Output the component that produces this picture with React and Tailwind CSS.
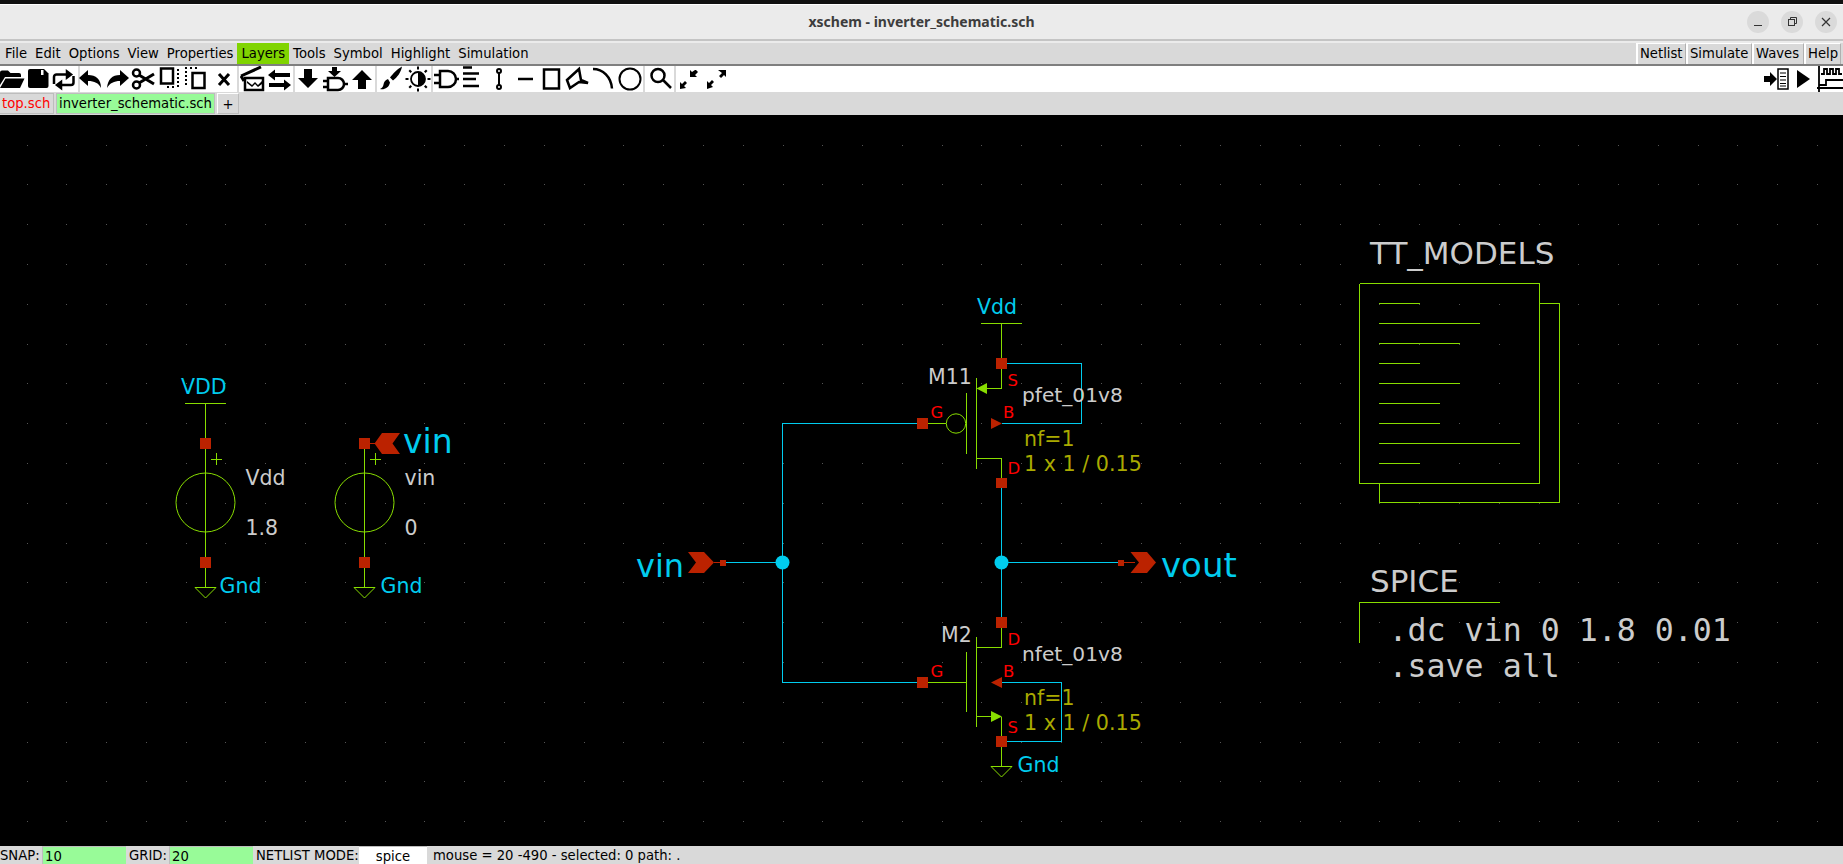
import React from 'react';

const CYAN = '#00ccee';
const GREEN = '#88dd00';
const RED = '#bb2200';
const LABEL = '#ff0000';
const GREY = '#cccccc';
const OLIVE = '#aaaa00';

const leftMenu = ['File', 'Edit', 'Options', 'View', 'Properties', 'Layers', 'Tools', 'Symbol', 'Highlight', 'Simulation'];
const rightMenu = [
  { name: 'Netlist', w: 'w-[50px]' },
  { name: 'Simulate', w: 'w-[66px]' },
  { name: 'Waves', w: 'w-[52px]' },
  { name: 'Help', w: 'w-[37px]' },
];

// toolbar icons, all drawn in a 26x26 box
const I = {
  open: (
    <>
      <path d="M0 6.500A2 2 0 0 1 2 4.500h6l2.500 2.500H19a2 2 0 0 1 2 2V11H5L0 19z" />
      <path d="M5.500 12.500H24.500L20 22H0z" />
    </>
  ),
  save: (
    <>
      <path d="M4 3h14l4.500 4.500V20a2 2 0 0 1-2 2H4a2 2 0 0 1-2-2V5a2 2 0 0 1 2-2z" />
      <rect x="15" y="4" width="2.500" height="5" fill="#fff" />
    </>
  ),
  reload: (
    <g fill="none" stroke="#000" strokeWidth="2.500">
      <path d="M2 18v-7a2.500 2.500 0 0 1 2.500-2.500H16" />
      <path d="M21.500 10v6.500a2.500 2.500 0 0 1-2.500 2.500H7" />
      <path d="M15 5.500l4 3-4 3z" fill="#000" />
      <path d="M9 16l-4 3 4 3z" fill="#000" />
    </g>
  ),
  undo: <path d="M1 12l9-8v5c8 0 13 4 13 13-2.500-5-6.500-7-13-7v5z" />,
  redo: <path d="M24 12l-9-8v5C7 9 3 13 2 22c3-5 7-7 13-7v5z" />,
  cut: (
    <g fill="none" stroke="#000" strokeWidth="2.500">
      <circle cx="5.500" cy="7" r="3.500" />
      <circle cx="5.500" cy="19" r="3.500" />
      <path d="M8 9l15 9M8 17l15-9" strokeWidth="3" />
    </g>
  ),
  copy: (
    <>
      <rect x="3" y="2.500" width="12" height="15" fill="none" stroke="#000" strokeWidth="2.500" />
      <path d="M19 3h2v2h-2zM19 7h2v2h-2zM19 11h2v2h-2zM19 15h2v2h-2zM19 19h2v2h-2zM14 20h2v2h-2zM9 20h2v2H9z" />
    </>
  ),
  move: (
    <>
      <rect x="8.500" y="7" width="12" height="15" fill="none" stroke="#000" strokeWidth="2.500" />
      <path d="M1 1h2v2H1zM1 5h2v2H1zM1 9h2v2H1zM1 13h2v2H1zM1 17h2v2H1zM6 1h2v2H6zM11 1h2v2h-2z" />
    </>
  ),
  del: <path d="M8 8l10 11M18 8L8 19" fill="none" stroke="#000" strokeWidth="3" />,
  load: (
    <>
      <path d="M1 10L21 1M1 10l3 5" fill="none" stroke="#000" strokeWidth="3" />
      <rect x="5" y="12" width="18" height="12" fill="none" stroke="#000" strokeWidth="2.500" />
      <path d="M7 15l5 4 3-3 3 3 4-4v3l-4 3-3-3-3 3-5-4z" />
    </>
  ),
  swap: (
    <>
      <path d="M1 9l7-5.500v3.500h15v4H8v3.500z" />
      <path d="M25 19l-7-5.500V17H3v4h15v3.500z" transform="translate(-1 0)" />
    </>
  ),
  down: <path d="M9 3h8v9h6L13 22 3 12h6z" />,
  descend: (
    <>
      <path d="M10 1h5v4h4l-6.500 6L6 5h4z" />
      <path d="M6 12h10a6 6 0 0 1 0 12H6z" fill="none" stroke="#000" strokeWidth="2.500" />
      <path d="M1 15h5M1 21h5M22 18h4" fill="none" stroke="#000" strokeWidth="2.500" />
    </>
  ),
  up: <path d="M9 23h8v-9h6L13 4 3 14h6z" />,
  brush: <path d="M24 0.500c-4 2-9 7-12 11l3 3c4-3 8-8 9-14zM10 13c-3 1-4 3-4.500 5.500-.3 2-1.500 3.500-3.500 4.500 4 1 9-1 10-6.500z" />,
  sun: (
    <>
      <circle cx="13" cy="13" r="7" fill="none" stroke="#000" strokeWidth="1.800" />
      <path d="M13 6a7 7 0 0 1 0 14z" />
      <path d="M12 0.500h2v3h-2zM12 22.500h2v3h-2zM0.500 12h3v2h-3zM22.500 12h3v2h-3zM3.500 5l1.500-1.500 2 2L5.500 7zM19 20.500l1.500-1.500 2 2-1.500 1.500zM19 5.500l2-2L22.500 5l-2 2zM3.500 21l2-2L7 20.500l-2 2z" />
    </>
  ),
  gate: (
    <g fill="none" stroke="#000" strokeWidth="2.500">
      <path d="M7 5h8a8 8 0 0 1 0 16H7z" />
      <path d="M1 9h6M1 17h6M23 13h3" />
    </g>
  ),
  net: <path d="M4 1.500h9M4 7.500h16M4 13h13M4 20h16" fill="none" stroke="#000" strokeWidth="2.500" />,
  wire: (
    <g fill="none" stroke="#000" strokeWidth="2">
      <circle cx="13" cy="5" r="2" />
      <circle cx="13" cy="21" r="2" />
      <path d="M13 7v12" />
    </g>
  ),
  line: <path d="M6 13h15" fill="none" stroke="#000" strokeWidth="2.500" />,
  rect: <rect x="6" y="3.500" width="15" height="19" fill="none" stroke="#000" strokeWidth="2.500" />,
  poly: <path d="M3 14L15 3l2 11 7 3-9-1-9 6z" fill="none" stroke="#000" strokeWidth="2.500" strokeLinejoin="miter" />,
  arc: <path d="M2 3c10 0 18 8 19 19.500" fill="none" stroke="#000" strokeWidth="2.500" />,
  circle: <circle cx="13" cy="13" r="10.500" fill="none" stroke="#000" strokeWidth="2" />,
  zoom: (
    <g fill="none" stroke="#000" strokeWidth="2.500">
      <circle cx="11" cy="9.500" r="6.500" />
      <path d="M16 14l8 8" />
    </g>
  ),
  zoomOut: (
    <>
      <path d="M17 3l2 2-3 3 2 2h-7V3l2 2 3-2z" transform="translate(2 1)" />
      <path d="M3 23v-7l2 2 3-3 2 2-3 3 2 2-6 1z" />
    </>
  ),
  zoomIn: (
    <>
      <path d="M14 4h8v7l-2-2-3 3-2-2 3-3z" />
      <path d="M3 23v-8l2 2 3-3 2 2-3 3 2 2z" />
    </>
  ),
  netlist: (
    <>
      <path d="M0 10h6V6l7 7-7 7v-4H0z" />
      <rect x="14" y="3" width="10" height="20" fill="#fff" stroke="#000" strokeWidth="1.500" />
      <path d="M16 7h6M16 10.500h6M16 14h6M16 17.500h6M16 20h6" stroke="#000" strokeWidth="1.200" />
    </>
  ),
  play: <path d="M7 4l13 9-13 9z" />,
  waves: (
    <g fill="none" stroke="#000" strokeWidth="1.800">
      <path d="M2 0v26M0 22h26" />
      <path d="M4 8h3V3h3v5h3V3h3v5h3V3h3v5h3" />
      <path d="M2 19h7v-5h17" />
    </g>
  ),
};

const Tool = ({ icon }) => (
  <div className="flex-1 flex items-center justify-center">
    <svg width="26" height="26" viewBox="0 0 26 26" className="shrink-0">
      {I[icon]}
    </svg>
  </div>
);

const toolGroups = [
  { w: 'w-[76px]', icons: ['open', 'save', 'reload'] },
  { w: 'w-[159px]', icons: ['undo', 'redo', 'cut', 'copy', 'move', 'del'] },
  { w: 'w-[54px]', icons: ['load', 'swap'] },
  { w: 'w-[80px]', icons: ['down', 'descend', 'up'] },
  { w: 'w-[54px]', icons: ['brush', 'sun'] },
  { w: 'w-[210px]', icons: ['gate', 'net', 'wire', 'line', 'rect', 'poly', 'arc', 'circle'] },
  { w: 'w-[29px]', icons: ['zoom'] },
  { w: 'w-[54px]', icons: ['zoomOut', 'zoomIn'] },
];

const Ln = ({ p, c = GREEN }) => (
  <polyline points={p} fill="none" stroke={c} strokeWidth="1" shapeRendering="crispEdges" />
);

const Pin = ({ x, y }) => <rect x={x - 5.5} y={y - 5.5} width="11" height="11" fill={RED} />;

const T = ({ x, y, s = 20.5, c = GREY, children, mono }) => (
  <text
    x={x}
    y={y}
    fontSize={s}
    fill={c}
    className={mono ? "font-['DejaVu_Sans_Mono',monospace]" : "font-['DejaVu_Sans',sans-serif]"}
    xmlSpace="preserve"
  >
    {children}
  </text>
);

const Gnd = ({ x, y }) => (
  <polygon points={`${x - 10.5},${y} ${x + 10.5},${y} ${x},${y + 10.5}`} fill="none" stroke={GREEN} strokeWidth="1" />
);

const Source = ({ x, name, value, net, gndX }) => (
  <>
    <circle cx={x} cy={502.5} r="29.5" fill="none" stroke={GREEN} strokeWidth="1" />
    <Ln p={`${x},${net ? 443.5 : 403.5} ${x},587.5`} />
    <Ln p={`${x + 5},459 ${x + 16},459`} />
    <Ln p={`${x + 10.5},453 ${x + 10.5},465`} />
    <Pin x={x} y={443.5} />
    <Pin x={x} y={562.5} />
    <Gnd x={x} y={587.5} />
    <T x={x + 40} y={485}>{name}</T>
    <T x={x + 40} y={534.5}>{value}</T>
    <T x={gndX} y={592.5} c={CYAN}>Gnd</T>
  </>
);

const Schematic = () => {
  const dots = [];
  for (let i = 0; i < 47; i++) {
    for (let j = 0; j < 18; j++) {
      dots.push(
        <rect
          key={`${i}-${j}`}
          x={Math.round(26.5 + i * 39.79)}
          y={Math.round(144.5 + j * 39.8)}
          width="1"
          height="1"
          fill="#555555"
        />
      );
    }
  }
  const docLines = [
    [303.5, 1420], [323.5, 1480], [343.5, 1460], [363.5, 1420], [383.5, 1460],
    [403.5, 1440], [423.5, 1440], [443.5, 1520], [463.5, 1420],
  ];

  return (
    <svg width="1843" height="731" viewBox="0 115 1843 731" className="block">
      {dots}

      {/* voltage sources */}
      <Ln p="185,403.500 226,403.500" />
      <T x={181} y={394} c={CYAN}>VDD</T>
      <Source x={205.5} name="Vdd" value="1.8" gndX={219.5} />
      <Source x={364.5} name="vin" value="0" net gndX={380.5} />
      <Ln p="370,443.500 375,443.500" c={RED} />
      <polygon points="374.500,443.500 382,433 400,433 392.500,443.500 400,454 382,454" fill={RED} />
      <T x={403} y={453} s={33} c={CYAN}>vin</T>

      {/* wires */}
      <Ln c={CYAN} p="723,562.500 782.500,562.500" />
      <Ln c={CYAN} p="1001.500,562.500 1121,562.500" />
      <Ln c={CYAN} p="923,423.500 782.500,423.500 782.500,682.500 923,682.500" />
      <Ln c={CYAN} p="1001.500,483 1001.500,622" />
      <circle cx="782.5" cy="562.5" r="7" fill={CYAN} />
      <circle cx="1001.5" cy="562.5" r="7" fill={CYAN} />

      {/* vin / vout pins */}
      <T x={636} y={576.5} s={32} c={CYAN}>vin</T>
      <polygon points="688,552 704,552 714,562.500 704,573 688,573 696,562.500" fill={RED} />
      <Ln c={RED} p="714,562.500 722,562.500" />
      <rect x="720" y="560" width="6" height="6" fill={RED} />
      <polygon points="1130.500,552 1147,552 1156,562.500 1147,573 1130.500,573 1139,562.500" fill={RED} />
      <Ln c={RED} p="1124,562.500 1135,562.500" />
      <rect x="1118" y="560" width="6" height="6" fill={RED} />
      <T x={1161} y={576.5} s={34} c={CYAN}>vout</T>

      {/* pfet */}
      <T x={977} y={314} c={CYAN}>Vdd</T>
      <Ln p="981,323.500 1022,323.500" />
      <Ln p="1001.500,323.500 1001.500,388.500 987,388.500" />
      <polygon points="976.500,388.500 987,383 987,394" fill={GREEN} />
      <Ln p="976.500,378 976.500,469" />
      <Ln p="966.500,393 966.500,454" />
      <Ln p="976.500,458.500 1001.500,458.500 1001.500,480" />
      <circle cx="956" cy="423.5" r="9.7" fill="none" stroke={GREEN} strokeWidth="1" />
      <Ln p="923,423.500 946,423.500" />
      <Ln c={CYAN} p="1001.500,363.500 1081.500,363.500 1081.500,423.500 1001.500,423.500" />
      <polygon points="991,418 991,429 1002,423.500" fill={RED} />
      <Pin x={1001.5} y={363.5} />
      <Pin x={922.5} y={423.5} />
      <rect x="996" y="478" width="11" height="10" fill={RED} />
      <T x={928} y={383.5}>M11</T>
      <T x={1022} y={401.5} s={20.2}>pfet_01v8</T>
      <T x={1024} y={446} c={OLIVE}>nf=1</T>
      <T x={1024} y={471} s={20.7} c={OLIVE}>1 x 1 / 0.15</T>
      <T x={1007.5} y={385.5} s={16.5} c={LABEL}>S</T>
      <T x={930.5} y={418} s={16.5} c={LABEL}>G</T>
      <T x={1003} y={418} s={16.5} c={LABEL}>B</T>
      <T x={1007.5} y={473.5} s={16.5} c={LABEL}>D</T>

      {/* nfet */}
      <Ln p="1001.500,628 1001.500,647.500 976.500,647.500" />
      <Ln p="976.500,637 976.500,727" />
      <Ln p="966.500,652 966.500,712" />
      <Ln p="923,682.500 966.500,682.500" />
      <Ln p="976.500,716.500 991,716.500" />
      <polygon points="991,711 991,722 1002,716.500" fill={GREEN} />
      <Ln p="1001.500,716.500 1001.500,766.500" />
      <Ln c={CYAN} p="1001.500,682.500 1061.500,682.500 1061.500,741.500 1001.500,741.500" />
      <polygon points="991,682.500 1002,677 1002,688" fill={RED} />
      <Pin x={1001.5} y={622.5} />
      <Pin x={922.5} y={682.5} />
      <Pin x={1001.5} y={741.5} />
      <Gnd x={1001.5} y={766.5} />
      <T x={941} y={642}>M2</T>
      <T x={1022} y={660.5} s={20.2}>nfet_01v8</T>
      <T x={1024} y={705} c={OLIVE}>nf=1</T>
      <T x={1024} y={729.5} s={20.7} c={OLIVE}>1 x 1 / 0.15</T>
      <T x={1007.5} y={644.5} s={16.5} c={LABEL}>D</T>
      <T x={930.5} y={677} s={16.5} c={LABEL}>G</T>
      <T x={1003} y={677} s={16.5} c={LABEL}>B</T>
      <T x={1007.5} y={732.5} s={16.5} c={LABEL}>S</T>
      <T x={1017.5} y={771.5} c={CYAN}>Gnd</T>

      {/* TT_MODELS */}
      <T x={1370} y={263.5} s={31}>TT_MODELS</T>
      <Ln p="1359.500,283.500 1539.500,283.500 1539.500,483.500 1359.500,483.500 1359.500,283.500" />
      <Ln p="1539.500,303.500 1559.500,303.500 1559.500,502.500 1379.500,502.500 1379.500,483.500" />
      {docLines.map(([y, x2]) => (
        <Ln key={y} p={`1379,${y} ${x2},${y}`} />
      ))}

      {/* SPICE */}
      <T x={1370} y={591.5} s={31}>SPICE</T>
      <Ln p="1359.500,642.500 1359.500,602.500 1500,602.500" />
      <T x={1388.5} y={640.5} s={31.6} mono>.dc vin 0 1.8 0.01</T>
      <T x={1388.5} y={676.5} s={31.6} mono>.save all</T>
    </svg>
  );
};

const App = () => {
  return (
    <div className="w-[1843px] h-[864px] overflow-hidden flex flex-col bg-[#d9d9d9] text-black text-[13.2px] leading-[20px] font-['DejaVu_Sans',sans-serif]">
      <div className="h-[4px] bg-[#111111] shrink-0" />

      {/* title bar */}
      <div className="h-[37px] shrink-0 bg-[#ebebeb] border-t border-white border-b-2 border-b-[#c4c4c4] flex items-center justify-center relative">
        <span className="font-['Noto_Sans',sans-serif] font-bold text-[14px] text-[#3d3d3d]">xschem - inverter_schematic.sch</span>
        <div className="absolute right-[6px] top-[6px] flex gap-[12px]">
          <div className="w-[22px] h-[22px] rounded-full bg-[#dadada] flex items-center justify-center">
            <div className="w-[8px] h-[1px] bg-[#333333] mt-[7px]" />
          </div>
          <div className="w-[22px] h-[22px] rounded-full bg-[#dadada] flex items-center justify-center">
            <svg width="10" height="10" viewBox="0 0 10 10" fill="none" stroke="#333">
              <rect x="1.500" y="2.500" width="6" height="6" />
              <path d="M3.500 2.500V0.500h6v6h-2" />
            </svg>
          </div>
          <div className="w-[22px] h-[22px] rounded-full bg-[#dadada] flex items-center justify-center">
            <svg width="10" height="10" viewBox="0 0 10 10" fill="none" stroke="#333" strokeWidth="1.200">
              <path d="M1 1l8 8M9 1l-8 8" />
            </svg>
          </div>
        </div>
      </div>

      {/* menu bar */}
      <div className="h-[25px] shrink-0 bg-[#ebebeb] pt-[2px] flex flex-col">
        <div className="flex-1 bg-[#d9d9d9] border-b-2 border-b-[#7f7f7f] flex items-start justify-between pl-[1px] pr-[2px]">
          <div className="flex">
            {leftMenu.map((m) => (
              <span key={m} className={`px-[4px] h-[21px] leading-[21px] ${m === 'Layers' ? 'bg-[#80d400]' : ''}`}>
                {m}
              </span>
            ))}
          </div>
          <div className="flex">
            {rightMenu.map((m) => (
              <span key={m.name} className={`${m.w} pl-[2px] h-[21px] leading-[20px] border-l-2 border-t border-white border-r border-r-[#b0b0b0]`}>
                {m.name}
              </span>
            ))}
          </div>
        </div>
      </div>

      {/* toolbar */}
      <div className="h-[26px] shrink-0 bg-white flex items-center">
        {toolGroups.map((g, i) => (
          <div key={i} className={`h-full flex ${g.w} ${i < toolGroups.length - 1 ? 'mr-[2px] border-r-0' : ''}`}>
            {g.icons.map((ic) => (
              <Tool key={ic} icon={ic} />
            ))}
            {i < toolGroups.length - 1 && <div className="w-[2px] h-full bg-[#d9d9d9] shrink-0 -mr-[2px]" />}
          </div>
        ))}
        <div className="flex ml-auto w-[79px] h-full">
          <Tool icon="netlist" />
          <Tool icon="play" />
          <Tool icon="waves" />
        </div>
      </div>

      {/* tabs */}
      <div className="h-[23px] shrink-0 bg-[#d9d9d9] flex items-start pt-[1px] gap-[2px]">
        <span className="w-[54px] h-[21px] pl-[2px] text-[#ff0000] leading-[19px] border border-[#bdbdbd] border-l-0">top.sch</span>
        <span className="w-[159px] h-[21px] pl-[2px] bg-[#98fb98] leading-[19px] border border-[#bdbdbd]">inverter_schematic.sch</span>
        <span className="w-[22px] h-[21px] text-center bg-[#d9d9d9] leading-[21px] border border-[#bdbdbd] border-t-white border-l-white">+</span>
      </div>

      {/* canvas */}
      <div className="h-[731px] shrink-0 bg-black">
        <Schematic />
      </div>

      {/* status bar */}
      <div className="h-[18px] shrink-0 bg-[#d9d9d9] flex items-start whitespace-pre leading-[20px]">
        <span className="w-[42px]">SNAP:</span>
        <span className="w-[84px] h-[18px] bg-[#98fb98] pl-[2px] border-t border-l border-[#bdbdbd]">10</span>
        <span className="w-[43px] pl-[3px]">GRID:</span>
        <span className="w-[84px] h-[18px] bg-[#98fb98] pl-[2px] border-t border-l border-[#bdbdbd]">20</span>
        <span className="w-[106px] pl-[3px]">NETLIST MODE:</span>
        <span className="w-[68px] h-[18px] bg-white text-center border-t border-[#bdbdbd]">spice</span>
        <span className="pl-[6px]">mouse = 20 -490 - selected: 0 path: .</span>
      </div>
    </div>
  );
};

export default App;
